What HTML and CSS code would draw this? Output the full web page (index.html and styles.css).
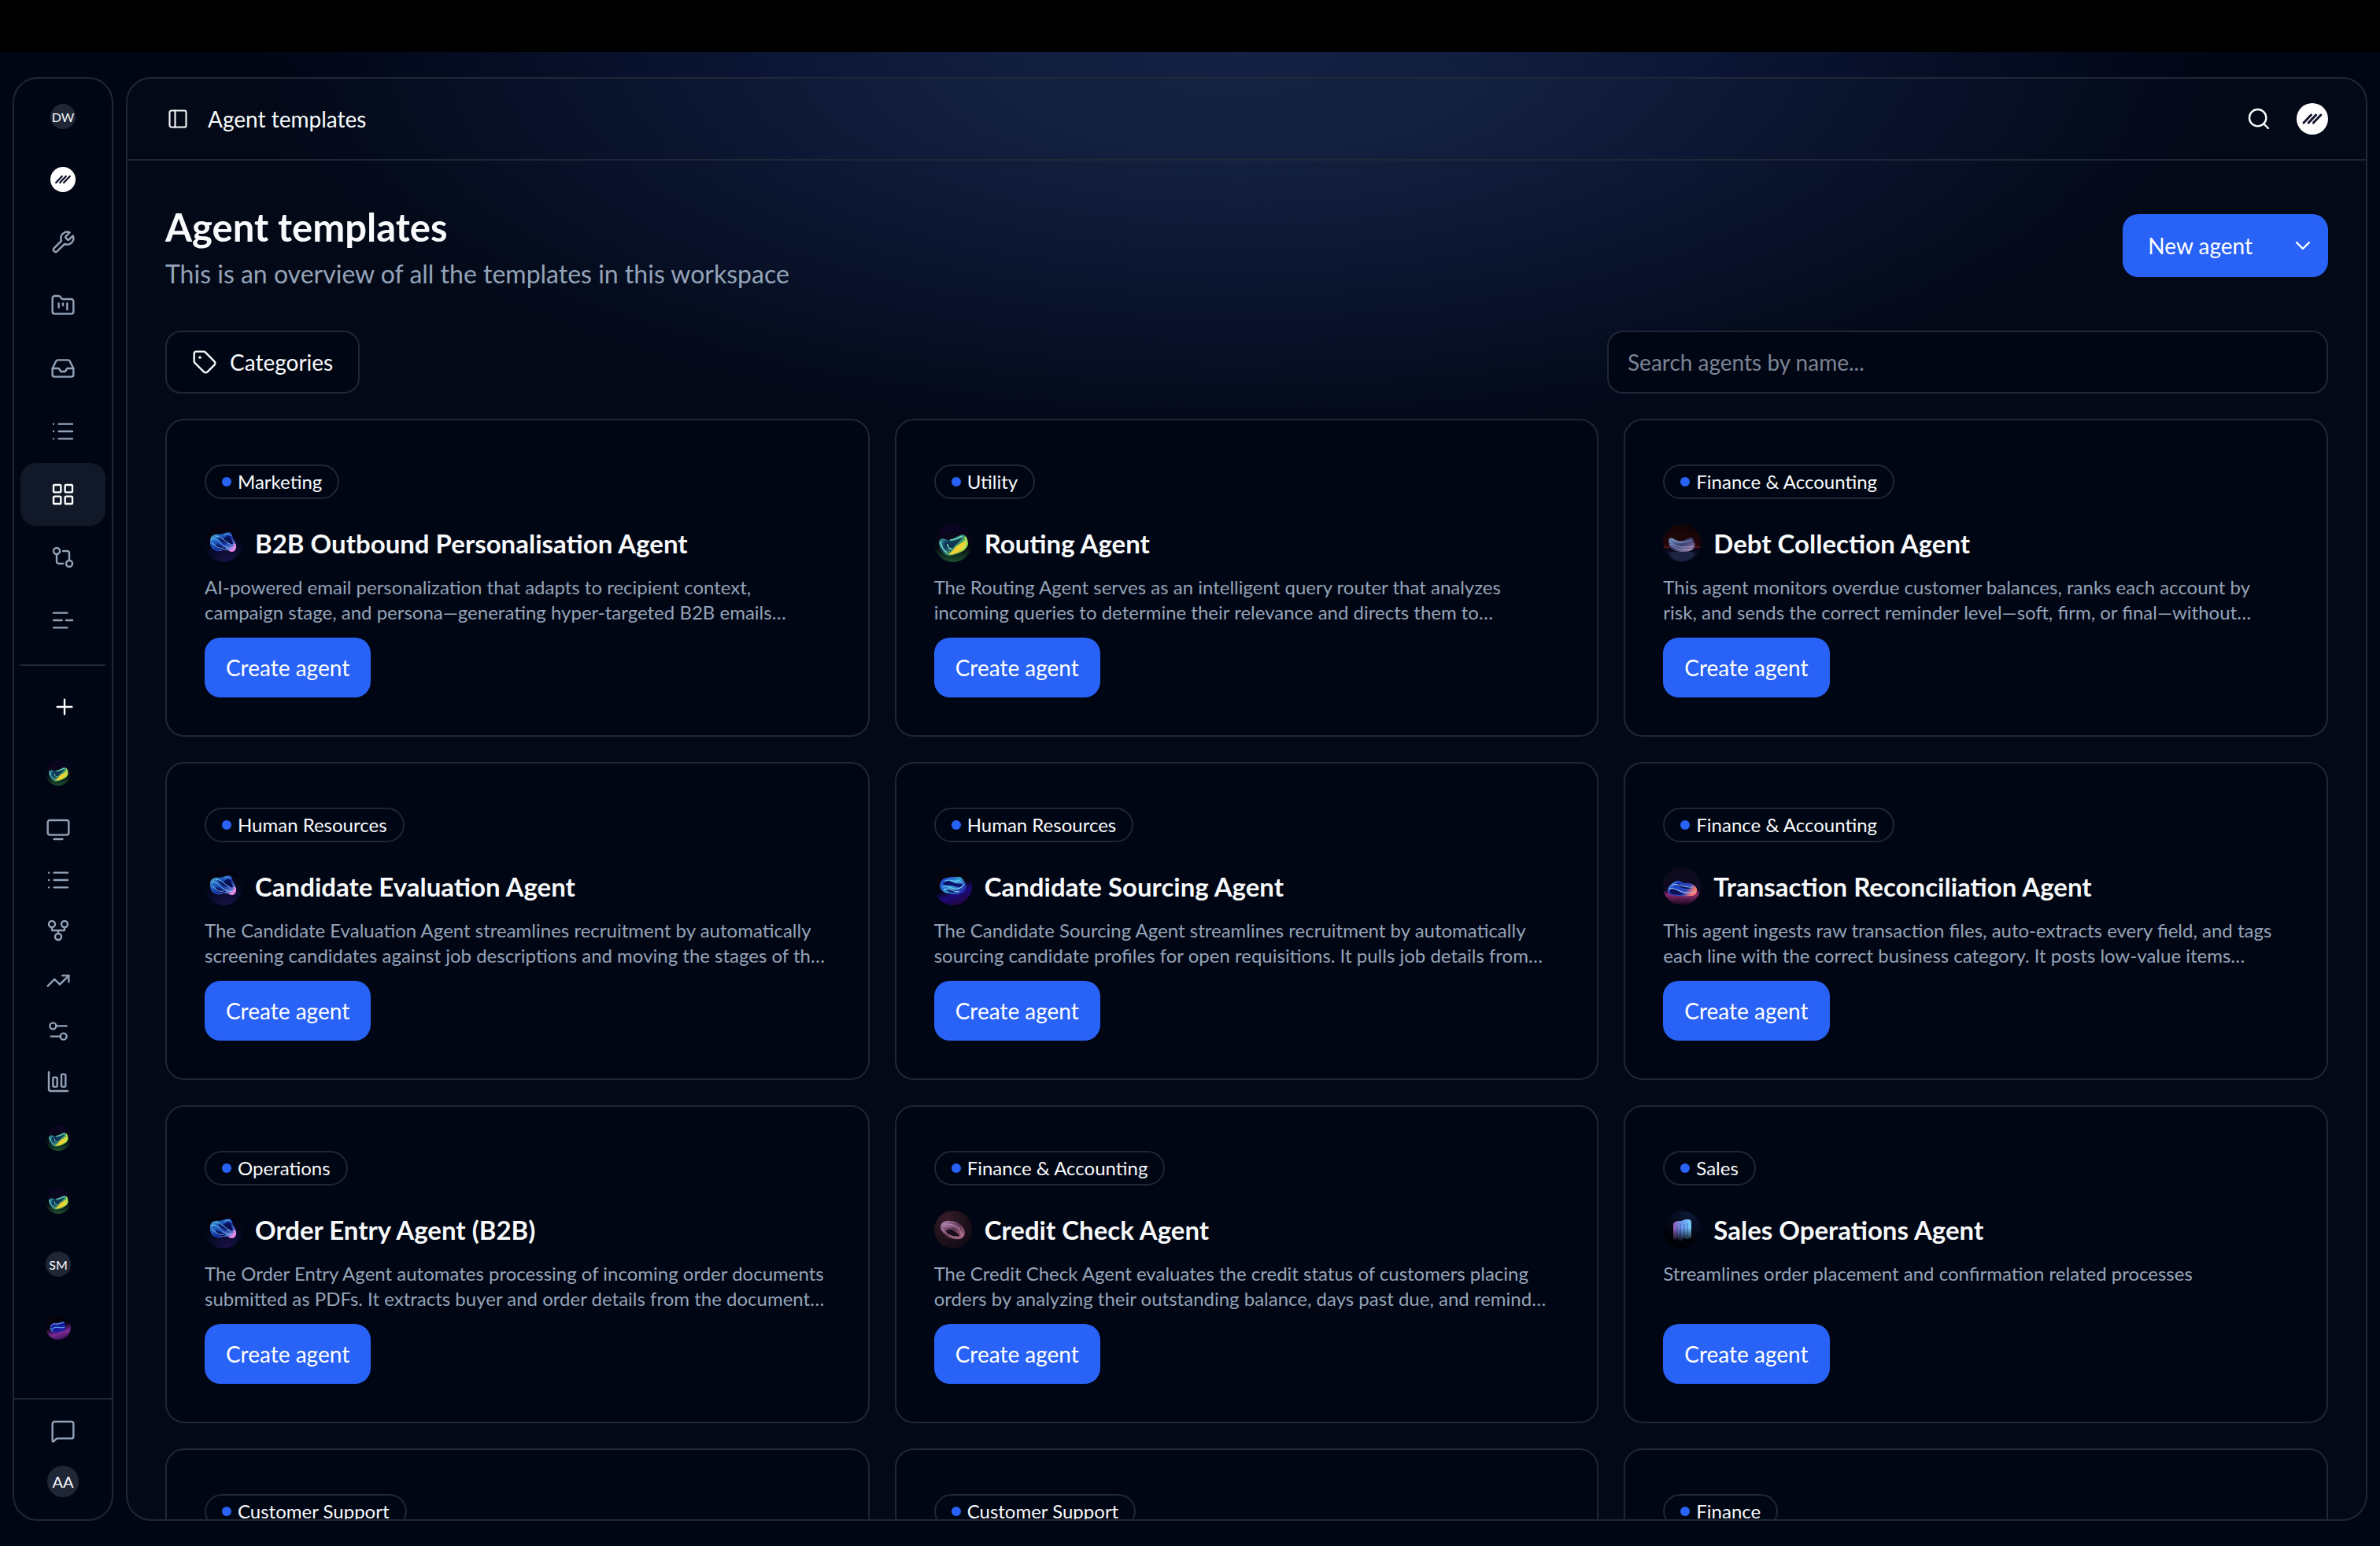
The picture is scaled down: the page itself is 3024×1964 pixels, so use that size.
FILE: index.html
```
<!DOCTYPE html>
<html lang="en">
<head>
  <meta charset="UTF-8" />
  <meta name="viewport" content="width=device-width, initial-scale=1.0" />
  <title>Agent templates</title>
  <link rel="stylesheet" href="styles.css">
</head>
<body>
  <svg class="defs" aria-hidden="true">
    <defs>
      <radialGradient id="bg-blue" cx="0.6" cy="1" r="0.8"><stop offset="0" stop-color="#1b1046" /><stop offset="0.5" stop-color="#080c2c" /><stop offset="1" stop-color="#03040f" /></radialGradient>
      <linearGradient id="fill-blue" x1="0" y1="0" x2="1" y2="0.8"><stop offset="0" stop-color="#5fd0d8" /><stop offset="0.3" stop-color="#2368c4" /><stop offset="0.6" stop-color="#1430a0" /><stop offset="0.8" stop-color="#4a6cc8" /><stop offset="1" stop-color="#e27ae0" /></linearGradient>
      <linearGradient id="bg-green" x1="0" y1="0" x2="0" y2="1"><stop offset="0" stop-color="#0c0426" /><stop offset="0.6" stop-color="#06080f" /><stop offset="1" stop-color="#1c5030" /></linearGradient>
      <linearGradient id="fill-green" x1="0" y1="0" x2="1" y2="0.6"><stop offset="0" stop-color="#48c8b0" /><stop offset="0.4" stop-color="#123e6c" /><stop offset="0.7" stop-color="#3f9a70" /><stop offset="1" stop-color="#b4e040" /></linearGradient>
      <linearGradient id="bg-debt" x1="0" y1="0" x2="0" y2="1"><stop offset="0" stop-color="#120406" /><stop offset="0.58" stop-color="#240608" /><stop offset="0.66" stop-color="#0a0a1c" /><stop offset="1" stop-color="#10122c" /></linearGradient>
      <linearGradient id="fill-debt" x1="0" y1="0" x2="1" y2="1"><stop offset="0" stop-color="#6a8cb8" /><stop offset="0.5" stop-color="#3a3f70" /><stop offset="1" stop-color="#b08bb4" /></linearGradient>
      <linearGradient id="bg-violet" x1="0.3" y1="0" x2="0.7" y2="1"><stop offset="0.5" stop-color="#04050f" /><stop offset="0.7" stop-color="#1d0a7a" /><stop offset="1" stop-color="#220638" /></linearGradient>
      <linearGradient id="fill-violet" x1="0" y1="0" x2="1" y2="0.6"><stop offset="0" stop-color="#3c50d8" /><stop offset="0.3" stop-color="#1c58c8" /><stop offset="0.6" stop-color="#3aa0d8" /><stop offset="1" stop-color="#2428a8" /></linearGradient>
      <linearGradient id="bg-pink" x1="0" y1="0" x2="0" y2="1"><stop offset="0" stop-color="#0c0a1a" /><stop offset="0.6" stop-color="#100a24" /><stop offset="0.72" stop-color="#8a2a70" /><stop offset="1" stop-color="#100416" /></linearGradient>
      <linearGradient id="fill-pink" x1="0" y1="0" x2="1" y2="0.4"><stop offset="0" stop-color="#7ac8ff" /><stop offset="0.35" stop-color="#1d3fc4" /><stop offset="0.75" stop-color="#3448c0" /><stop offset="1" stop-color="#ff7a70" /></linearGradient>
      <radialGradient id="bg-credit" cx="0.3" cy="0.2" r="0.9"><stop offset="0" stop-color="#341c26" /><stop offset="1" stop-color="#120a14" /></radialGradient>
      <linearGradient id="fill-credit" x1="0" y1="0" x2="1" y2="1"><stop offset="0" stop-color="#b48ab8" /><stop offset="0.5" stop-color="#5c3350" /><stop offset="1" stop-color="#b8748c" /></linearGradient>
      <radialGradient id="bg-sales" cx="0.7" cy="0.1" r="0.8"><stop offset="0" stop-color="#0c1838" /><stop offset="1" stop-color="#010208" /></radialGradient>
      <linearGradient id="fill-sales" x1="0" y1="0" x2="1" y2="0"><stop offset="0" stop-color="#9a5ab8" /><stop offset="0.5" stop-color="#6a9cf0" /><stop offset="1" stop-color="#7ad0ff" /></linearGradient>
      <linearGradient id="fade-sales" x1="0" y1="0" x2="0" y2="1"><stop offset="0.2" stop-color="#010208" stop-opacity="0" /><stop offset="1" stop-color="#010208" /></linearGradient>
      <linearGradient id="bg-magenta" x1="0.3" y1="0" x2="0.6" y2="1"><stop offset="0.45" stop-color="#04030c" /><stop offset="0.75" stop-color="#7a2a98" /><stop offset="1" stop-color="#3a1450" /></linearGradient>
    </defs>

    <symbol id="orb-blue" viewBox="0 0 48 48">
      <circle cx="24" cy="24" r="24" fill="url(#bg-blue)" />
      <path d="M7 21c0-6 5-9 11-8 5 0 8-3 13-3 4 1 4 4 5 8 2 4 5 8 4 12-1 5-5 6-9 4-4-2-7-1-11 0-5 1-10-1-12-6-1-2-1-5-1-7z" fill="url(#fill-blue)" />
      <path d="M17 16c5 1 8 4 13 8-5 0-10-2-13-8zM24 18c3-3 7-4 9-1 1 3 3 5 3 8-4 1-9-3-12-7zM14 25c4 1 8 4 13 5-5 4-11 2-13-5z" fill="#081058" />
      <path d="M9 19c5-3 9 4 15 8 4 3 8 5 14 2M9 24c5 2 8 8 15 6M14 15c6 0 9 5 18 10M25 14c3-3 8-2 9 1" fill="none" stroke="#8fdcf5" stroke-width="1" opacity="0.8" />
      <path d="M32 33c4 1 8-3 6-8" fill="none" stroke="#f090e8" stroke-width="2" />
    </symbol>
    <symbol id="orb-green" viewBox="0 0 48 48">
      <circle cx="24" cy="24" r="24" fill="url(#bg-green)" />
      <path d="M6 24c0-6 5-7 11-4 6 0 11-5 18-7 6 0 8 6 8 12-1 7-8 10-13 12-7 3-14 4-18 0-4-4-6-8-6-13z" fill="url(#fill-green)" />
      <path d="M13 22c10 2 17-2 23-5-3 6-11 9-14 16-7-1-9-5-9-11z" fill="#103452" />
      <path d="M17 38c7-2 8-9 14-12 5-2 7-6 9-5 2 5-2 11-9 14-5 3-10 4-14 3z" fill="#efd232" />
      <path d="M8 22c1 7 3 11 8 14M20 20c7 0 11-4 16-5M17 25c0 5 3 7 6 6" fill="none" stroke="#7be8c8" stroke-width="1.500" />
      <path d="M39 16c3 5 2 11-3 15" fill="none" stroke="#b4e85a" stroke-width="2" />
    </symbol>
    <symbol id="orb-debt" viewBox="0 0 48 48">
      <circle cx="24" cy="24" r="24" fill="url(#bg-debt)" />
      <path d="M1 29h46" stroke="#802028" stroke-width="1" />
      <path d="M7 36c8-2 26-2 34 0-2 6-8 10-16 11-9 0-15-4-18-11z" fill="#1c2444" />
      <path d="M8 18c4-3 7 3 15 3 6 0 9-4 13-4 3 1 2 4 4 7 2 6-3 11-14 11-9 0-15-2-18-8-1-4-1-7 0-9z" fill="url(#fill-debt)" />
      <path d="M8 20c4 8 15 11 30 8M9 25c7 7 15 8 28 7M11 19c5 5 15 6 25 1" fill="none" stroke="#a8b8e0" stroke-width="1" opacity="0.8" />
    </symbol>
    <symbol id="orb-violet" viewBox="0 0 48 48">
      <circle cx="24" cy="24" r="24" fill="url(#bg-violet)" />
      <path d="M7 24c0-6 4-11 10-11 4-2 9 0 12-1 5-1 8 3 10 7 4 5 1 13-5 14-5 2-10 1-14 0-6 0-12-3-13-9z" fill="url(#fill-violet)" />
      <path d="M11 20c5-5 10-2 15 0 4 1 8 0 10 2-4 5-10 2-14 1-5-1-8 1-11-3zM15 28c5-2 9 1 15 2-5 3-13 2-15-2z" fill="#0a1068" />
      <path d="M10 25c7-4 12 4 20 2 4-1 7-3 8-6M13 18c6-5 11 1 16-1 3-1 5 1 7 3M12 28c6-2 12 3 20 3" fill="none" stroke="#8ce6ff" stroke-width="1" />
    </symbol>
    <symbol id="orb-pink" viewBox="0 0 48 48">
      <circle cx="24" cy="24" r="24" fill="url(#bg-pink)" />
      <path d="M6 29c0-5 7-11 12-12 4-1 6 3 10 3 7-1 13 2 15 7 1 5-1 8-6 9-9 1-20 0-26-1-4-1-5-3-5-6z" fill="url(#fill-pink)" />
      <path d="M12 27c5 0 9 6 16 7-7 1-15 1-18-1-3-2-1-6 2-6zM17 20c5 0 9 6 19 4 1 4-14 5-19-4z" fill="#0a1050" />
      <path d="M8 27c8-2 13 5 22 5 5 0 8 0 11-2M12 22c8-2 14 4 26 3" fill="none" stroke="#9cc8ff" stroke-width="1" />
    </symbol>
    <symbol id="orb-credit" viewBox="0 0 48 48">
      <circle cx="24" cy="24" r="24" fill="url(#bg-credit)" />
      <path d="M8 20c1-6 7-8 13-7 8 0 15 5 17 11 2 6 0 11-6 12-8 1-16-2-20-7-3-3-4-6-4-9z" fill="url(#fill-credit)" />
      <path d="M15 26c3-4 8-2 12 1 3 2 6 4 5 5-6 2-15 0-17-6z" fill="#1c0e1c" />
      <path d="M10 18c6 4 10 0 17 3 4 2 8 6 8 11M9 22c3 5 9 10 20 12M12 17c7 0 14 0 21 6" fill="none" stroke="#d8a8cc" stroke-width="1" opacity="0.7" />
    </symbol>
    <symbol id="orb-sales" viewBox="0 0 48 48">
      <circle cx="24" cy="24" r="24" fill="url(#bg-sales)" />
      <path d="M13 17c1-4 6-4 10-4 4-2 9-3 12-1 1 1 1 3 1 5v17l-5 2-5-1-3 4-5-3-5 1z" fill="url(#fill-sales)" />
      <path d="M18 18v18M22 17v20M27 17v18M31 16v17" stroke="#2a50a0" stroke-width="1" opacity="0.7" />
      <path d="M11 17h27v23H11z" fill="url(#fade-sales)" />
    </symbol>
    <symbol id="orb-magenta" viewBox="0 0 48 48">
      <circle cx="24" cy="24" r="24" fill="url(#bg-magenta)" />
      <path d="M9 22c2-6 7-6 11-6 5 0 10-3 15-2 3 2 3 9 3 14-4 4-10 3-14 5-5 2-9 1-13-1-3-3-3-7-2-10z" fill="#1b1ca0" />
      <path d="M10 23c1-5 6-6 11-5 6 0 9-3 14-3M12 28c8-8 15 0 24-4M10 25c0 4 1 6 4 7" fill="none" stroke="#6cc8f4" stroke-width="1.500" />
    </symbol>
    <symbol id="brand" viewBox="0 0 40 40">
      <circle cx="20" cy="20" r="20" fill="#fff" />
      <path d="M9 25l9.500-10M15.200 25l9.500-10M21.400 25l9.500-10" fill="none" stroke="#15172e" stroke-width="3" stroke-linecap="round" />
    </symbol>
    <symbol id="list" viewBox="0 0 24 24">
      <path d="M3 5h.01M3 12h.01M3 19h.01M8 5h13M8 12h13M8 19h13" />
    </symbol>
  </svg>

  <div class="screen-top"></div>
  <div class="app">
    <nav class="sidebar" aria-label="Workspace">
      <div class="nav-main">
        <a class="nav-item" href="#" aria-label="Workspace DW"><span class="initials">DW</span></a>
        <a class="nav-item" href="#" aria-label="Home"><svg class="avatar-sm"><use href="#brand" /></svg></a>
        <a class="nav-item" href="#" aria-label="Tools"><svg class="icon" viewBox="0 0 24 24"><path d="M14.700 6.300a1 1 0 0 0 0 1.400l1.600 1.600a1 1 0 0 0 1.400 0l3.770-3.770a6 6 0 0 1-7.940 7.940l-6.910 6.910a2.120 2.120 0 0 1-3-3l6.910-6.910a6 6 0 0 1 7.940-7.940l-3.760 3.760z" /></svg></a>
        <a class="nav-item" href="#" aria-label="Projects"><svg class="icon" viewBox="0 0 24 24"><path d="M4 20h16a2 2 0 0 0 2-2V8a2 2 0 0 0-2-2h-7.930a2 2 0 0 1-1.660-.9l-.82-1.200A2 2 0 0 0 7.930 3H4a2 2 0 0 0-2 2v13c0 1.100.9 2 2 2ZM8 10v4M12 10v2M16 10v6" /></svg></a>
        <a class="nav-item" href="#" aria-label="Inbox"><svg class="icon" viewBox="0 0 24 24"><path d="M22 12h-6l-2 3h-4l-2-3H2" /><path d="M5.450 5.110 2 12v6a2 2 0 0 0 2 2h16a2 2 0 0 0 2-2v-6l-3.450-6.890A2 2 0 0 0 16.760 4H7.240a2 2 0 0 0-1.790 1.110z" /></svg></a>
        <a class="nav-item" href="#" aria-label="Tasks"><svg class="icon"><use href="#list" /></svg></a>
        <a class="nav-item active" href="#" aria-label="Templates"><svg class="icon" viewBox="0 0 24 24"><rect x="3" y="3" width="7" height="7" rx="1" /><rect x="14" y="3" width="7" height="7" rx="1" /><rect x="14" y="14" width="7" height="7" rx="1" /><rect x="3" y="14" width="7" height="7" rx="1" /></svg></a>
        <a class="nav-item" href="#" aria-label="Compare"><svg class="icon" viewBox="0 0 24 24"><circle cx="18" cy="18" r="3" /><circle cx="6" cy="6" r="3" /><path d="M12 6h4a2 2 0 0 1 2 2v7M12 18H8a2 2 0 0 1-2-2V9" /></svg></a>
        <a class="nav-item" href="#" aria-label="Logs"><svg class="icon" viewBox="0 0 24 24"><path d="M3 5h13M3 12h8M15 12h6M3 19h13" /></svg></a>
      </div>

      <div class="nav-agents">
        <button class="nav-item add" type="button" aria-label="Add"><svg class="icon" viewBox="0 0 24 24"><path d="M5 12h14M12 5v14" /></svg></button>
        <div class="agent-list">
          <a class="nav-item" href="#" aria-label="Routing"><svg class="avatar-sm"><use href="#orb-green" /></svg></a>
          <a class="nav-item sub" href="#" aria-label="Overview"><svg class="icon" viewBox="0 0 24 24"><rect x="2" y="3" width="20" height="14" rx="2" /><path d="M8 21h8" /></svg></a>
          <a class="nav-item sub" href="#" aria-label="Runs"><svg class="icon"><use href="#list" /></svg></a>
          <a class="nav-item sub" href="#" aria-label="Flow"><svg class="icon" viewBox="0 0 24 24"><circle cx="12" cy="18" r="3" /><circle cx="6" cy="6" r="3" /><circle cx="18" cy="6" r="3" /><path d="M18 9v2c0 .6-.4 1-1 1H7c-.6 0-1-.4-1-1V9M12 12v3" /></svg></a>
          <a class="nav-item sub" href="#" aria-label="Trends"><svg class="icon" viewBox="0 0 24 24"><path d="M16 7h6v6" /><path d="m22 7-8.500 8.500-5-5L2 17" /></svg></a>
          <a class="nav-item sub" href="#" aria-label="Settings"><svg class="icon" viewBox="0 0 24 24"><path d="M20 7h-10M14 17H5" /><circle cx="17" cy="17" r="3" /><circle cx="7" cy="7" r="3" /></svg></a>
          <a class="nav-item sub" href="#" aria-label="Reports"><svg class="icon" viewBox="0 0 24 24"><path d="M3 3v16a2 2 0 0 0 2 2h16" /><rect x="15" y="5" width="4" height="12" rx="1" /><rect x="7" y="8" width="4" height="9" rx="1" /></svg></a>
          <a class="nav-item" href="#" aria-label="Agent"><svg class="avatar-sm"><use href="#orb-green" /></svg></a>
          <a class="nav-item" href="#" aria-label="Agent"><svg class="avatar-sm"><use href="#orb-green" /></svg></a>
          <a class="nav-item" href="#" aria-label="Agent SM"><span class="initials">SM</span></a>
          <a class="nav-item" href="#" aria-label="Agent"><svg class="avatar-sm"><use href="#orb-magenta" /></svg></a>
        </div>
      </div>

      <div class="nav-footer">
        <a class="footer-link" href="#" aria-label="Feedback"><svg class="icon" viewBox="0 0 24 24"><path d="M22 17a2 2 0 0 1-2 2H6.828a2 2 0 0 0-1.414.586l-2.202 2.202A.71.71 0 0 1 2 21.286V5a2 2 0 0 1 2-2h16a2 2 0 0 1 2 2z" /></svg></a>
        <button class="user" type="button">AA</button>
      </div>
    </nav>

    <main class="panel">
      <header class="topbar">
        <button class="icon-btn toggle" type="button" aria-label="Toggle sidebar"><svg class="icon icon-panel" viewBox="0 0 24 24"><rect x="3" y="3" width="18" height="18" rx="2" /><path d="M9 3v18" /></svg></button>
        <span class="crumb">Agent templates</span>
        <button class="icon-btn push" type="button" aria-label="Search"><svg class="icon" viewBox="0 0 24 24"><circle cx="11" cy="11" r="8" /><path d="m21 21-4.300-4.300" /></svg></button>
        <button class="icon-btn" type="button" aria-label="Account"><svg class="avatar-md"><use href="#brand" /></svg></button>
      </header>

      <div class="content">
        <div class="heading">
          <div class="heading-text">
            <h1>Agent templates</h1>
            <p>This is an overview of all the templates in this workspace</p>
          </div>
          <div class="split">
            <button class="split-main" type="button">New agent</button>
            <button class="split-more" type="button" aria-label="More options"><svg class="icon" viewBox="0 0 24 24"><path d="m6 9 6 6 6-6" /></svg></button>
          </div>
        </div>

        <div class="filters">
          <button class="categories" type="button">
            <svg class="icon" viewBox="0 0 24 24"><path d="M12.586 2.586A2 2 0 0 0 11.172 2H4a2 2 0 0 0-2 2v7.172a2 2 0 0 0 .586 1.414l8.704 8.704a2.426 2.426 0 0 0 3.420 0l6.580-6.580a2.426 2.426 0 0 0 0-3.420z" /><circle cx="7.500" cy="7.500" r="0.500" fill="currentColor" /></svg>
            Categories
          </button>
          <input class="search" type="text" placeholder="Search agents by name..." aria-label="Search agents by name">
        </div>

        <div class="grid">
          <article class="card">
            <span class="badge">Marketing</span>
            <h2><svg class="avatar-lg"><use href="#orb-blue" /></svg>B2B Outbound Personalisation Agent</h2>
            <p>AI-powered email personalization that adapts to recipient context,<br>campaign stage, and persona—generating hyper-targeted B2B emails…</p>
            <button class="create" type="button">Create agent</button>
          </article>
          <article class="card">
            <span class="badge">Utility</span>
            <h2><svg class="avatar-lg"><use href="#orb-green" /></svg>Routing Agent</h2>
            <p>The Routing Agent serves as an intelligent query router that analyzes<br>incoming queries to determine their relevance and directs them to…</p>
            <button class="create" type="button">Create agent</button>
          </article>
          <article class="card">
            <span class="badge">Finance &amp; Accounting</span>
            <h2><svg class="avatar-lg"><use href="#orb-debt" /></svg>Debt Collection Agent</h2>
            <p>This agent monitors overdue customer balances, ranks each account by<br>risk, and sends the correct reminder level—soft, firm, or final—without…</p>
            <button class="create" type="button">Create agent</button>
          </article>

          <article class="card">
            <span class="badge">Human Resources</span>
            <h2><svg class="avatar-lg"><use href="#orb-blue" /></svg>Candidate Evaluation Agent</h2>
            <p>The Candidate Evaluation Agent streamlines recruitment by automatically<br>screening candidates against job descriptions and moving the stages of th…</p>
            <button class="create" type="button">Create agent</button>
          </article>
          <article class="card">
            <span class="badge">Human Resources</span>
            <h2><svg class="avatar-lg"><use href="#orb-violet" /></svg>Candidate Sourcing Agent</h2>
            <p>The Candidate Sourcing Agent streamlines recruitment by automatically<br>sourcing candidate profiles for open requisitions. It pulls job details from…</p>
            <button class="create" type="button">Create agent</button>
          </article>
          <article class="card">
            <span class="badge">Finance &amp; Accounting</span>
            <h2><svg class="avatar-lg"><use href="#orb-pink" /></svg>Transaction Reconciliation Agent</h2>
            <p>This agent ingests raw transaction files, auto-extracts every field, and tags<br>each line with the correct business category. It posts low-value items…</p>
            <button class="create" type="button">Create agent</button>
          </article>

          <article class="card">
            <span class="badge">Operations</span>
            <h2><svg class="avatar-lg"><use href="#orb-blue" /></svg>Order Entry Agent (B2B)</h2>
            <p>The Order Entry Agent automates processing of incoming order documents<br>submitted as PDFs. It extracts buyer and order details from the document…</p>
            <button class="create" type="button">Create agent</button>
          </article>
          <article class="card">
            <span class="badge">Finance &amp; Accounting</span>
            <h2><svg class="avatar-lg"><use href="#orb-credit" /></svg>Credit Check Agent</h2>
            <p>The Credit Check Agent evaluates the credit status of customers placing<br>orders by analyzing their outstanding balance, days past due, and remind…</p>
            <button class="create" type="button">Create agent</button>
          </article>
          <article class="card">
            <span class="badge">Sales</span>
            <h2><svg class="avatar-lg"><use href="#orb-sales" /></svg>Sales Operations Agent</h2>
            <p>Streamlines order placement and confirmation related processes</p>
            <button class="create" type="button">Create agent</button>
          </article>

          <article class="card">
            <span class="badge">Customer Support</span>
          </article>
          <article class="card">
            <span class="badge">Customer Support</span>
          </article>
          <article class="card">
            <span class="badge">Finance</span>
          </article>
        </div>
      </div>
    </main>
  </div>
</body>
</html>
```
FILE: styles.css
```
:root {
  --bg: #010614;
  --line: #1f2737;
  --muted: #94a3b8;
  --text: #f8fafc;
  --blue: #2962f6;
}

* {
  box-sizing: border-box;
}

body {
  margin: 0;
  height: 100vh;
  display: flex;
  flex-direction: column;
  overflow: hidden;
  background: var(--bg);
  color: var(--text);
  font-family: Lato, "Liberation Sans", sans-serif;
  font-size: 28px;
}

button,
input {
  font: inherit;
  color: inherit;
}

button {
  padding: 0;
  border: none;
  background: none;
  cursor: pointer;
}

a {
  color: inherit;
  text-decoration: none;
}

.defs {
  position: absolute;
  width: 0;
  height: 0;
}

.screen-top {
  flex: none;
  height: 66px;
  background: #000;
}

.app {
  flex: 1;
  min-height: 0;
  display: flex;
  gap: 16px;
  padding: 32px 16px;
  background: radial-gradient(ellipse 42% 500px at 52% 0, #132143 0%, #111d3d 25%, #0b1533 50%, #060e25 72%, #020819 90%, transparent 100%);
}

.icon {
  display: block;
  width: 32px;
  height: 32px;
  fill: none;
  stroke: currentColor;
  stroke-width: 1.8;
  stroke-linecap: round;
  stroke-linejoin: round;
}

.icon-panel {
  width: 28px;
  height: 28px;
}

.avatar-sm {
  width: 32px;
  height: 32px;
}

.avatar-md {
  display: block;
  width: 40px;
  height: 40px;
}

.avatar-lg {
  flex: none;
  width: 48px;
  height: 48px;
}

/* sidebar */
.sidebar {
  flex: none;
  width: 128px;
  display: flex;
  flex-direction: column;
  border: 2px solid var(--line);
  border-radius: 32px;
  background: var(--bg);
  color: var(--muted);
}

.nav-main {
  padding: 8px 8px 0;
}

.nav-item {
  width: 100%;
  height: 80px;
  display: flex;
  align-items: center;
  justify-content: center;
  border-radius: 20px;
}

.nav-item.sub {
  height: 64px;
}

.nav-item.active {
  background: #111827;
  color: #fff;
}

.nav-agents {
  flex: 1;
  min-height: 0;
  margin: 16px 8px 0;
  padding-top: 12px;
  border-top: 2px solid var(--line);
}

.nav-item.add {
  padding-left: 4px;
  color: #fff;
}

.agent-list {
  padding: 4px 12px 0 0;
}

.initials,
.user {
  display: flex;
  align-items: center;
  justify-content: center;
  width: 32px;
  height: 32px;
  border-radius: 50%;
  background: #1f2737;
  color: var(--text);
  font-size: 16px;
}

.user {
  width: 40px;
  height: 40px;
  font-size: 20px;
}

.nav-footer {
  display: flex;
  flex-direction: column;
  align-items: center;
  gap: 28px;
  padding: 24px 0 28px;
  border-top: 2px solid var(--line);
}

/* main panel */
.panel {
  flex: 1;
  min-width: 0;
  display: flex;
  flex-direction: column;
  overflow: hidden;
  border: 2px solid var(--line);
  border-radius: 32px;
  background: rgba(148, 163, 184, 0.025);
}

.topbar {
  flex: none;
  display: flex;
  align-items: center;
  gap: 24px;
  height: 104px;
  padding: 0 48px;
  border-bottom: 2px solid var(--line);
}

.toggle {
  padding-left: 2px;
}

.push {
  margin-left: auto;
}

.topbar .push + .icon-btn {
  margin-left: 8px;
}

.content {
  flex: 1;
  min-height: 0;
  padding: 52px 48px 0;
}

.heading {
  display: flex;
  align-items: center;
  justify-content: space-between;
}

h1 {
  margin: 0 0 8px;
  font-size: 49px;
  line-height: 64px;
}

.heading-text p {
  margin: 0;
  font-size: 32px;
  line-height: 40px;
  color: var(--muted);
}

.split {
  display: flex;
  height: 80px;
  border-radius: 20px;
  background: var(--blue);
  color: #fff;
}

.split-main {
  padding: 0 32px;
}

.split-more {
  padding: 0 16px;
}

.filters {
  display: flex;
  justify-content: space-between;
  margin: 52px 0 32px;
}

.categories {
  display: flex;
  align-items: center;
  gap: 16px;
  height: 80px;
  padding: 0 32px;
  border: 2px solid var(--line);
  border-radius: 20px;
  background: var(--bg);
}

.search {
  width: calc(100% / 3);
  height: 80px;
  padding: 0 24px;
  border: 2px solid var(--line);
  border-radius: 20px;
  background: var(--bg);
}

.search::placeholder {
  color: #7b8494;
}

.grid {
  display: grid;
  grid-template-columns: repeat(3, 1fr);
  gap: 32px;
}

.card {
  display: flex;
  flex-direction: column;
  align-items: flex-start;
  min-height: 404px;
  padding: 56px 48px 48px;
  border: 2px solid var(--line);
  border-radius: 24px;
  background: var(--bg);
}

.badge {
  display: flex;
  align-items: center;
  gap: 8px;
  height: 44px;
  padding: 0 20px;
  border: 2px solid var(--line);
  border-radius: 22px;
  font-size: 24px;
  line-height: 28px;
}

.badge::before {
  content: "";
  width: 12px;
  height: 12px;
  border-radius: 50%;
  background: var(--blue);
}

.card h2 {
  display: flex;
  align-items: center;
  gap: 16px;
  margin: 32px 0 16px;
  font-size: 33px;
  line-height: 48px;
}

.card p {
  min-height: 64px;
  margin: 0 0 16px;
  font-size: 24px;
  line-height: 32px;
  color: var(--muted);
}

.create {
  height: 76px;
  padding: 0 27px;
  border-radius: 20px;
  background: var(--blue);
  color: #fff;
}
```
